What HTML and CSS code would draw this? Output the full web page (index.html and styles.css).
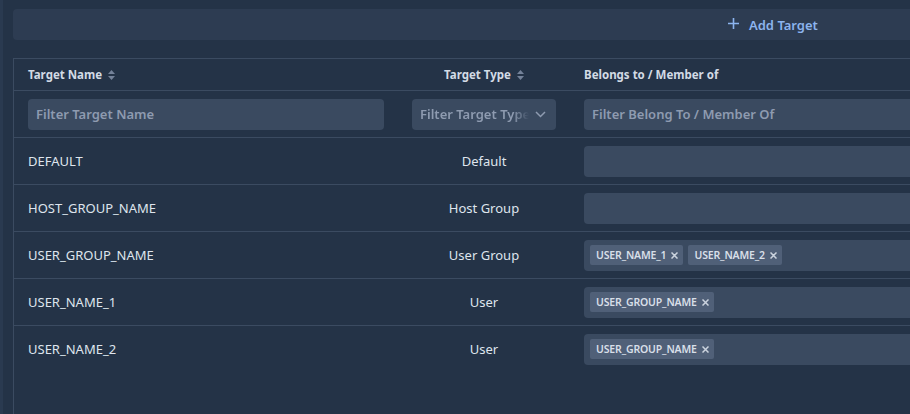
FILE: index.html
```html
<!DOCTYPE html>
<html>
<head>
<meta charset="utf-8">
<link rel="stylesheet" href="styles.css">
</head>
<body>
<div class="page">
  <div class="toolbar">
    <button class="add-btn"><svg class="plus" width="11" height="11" viewBox="0 0 11 11"><path d="M5.5 0v11M0 5.5h11" stroke="#8cb4ee" stroke-width="1.6"/></svg><span>Add Target</span></button>
  </div>
  <div class="table">
    <div class="row head">
      <div class="cell c1"><span>Target Name</span><svg class="sort" width="7" height="10" viewBox="0 0 7 10"><path d="M3.5 0L7 4H0z M3.5 10L7 6H0z" fill="#748299"/></svg></div>
      <div class="cell c2 center"><span>Target Type</span><svg class="sort" width="7" height="10" viewBox="0 0 7 10"><path d="M3.5 0L7 4H0z M3.5 10L7 6H0z" fill="#748299"/></svg></div>
      <div class="cell c3"><span>Belongs to / Member of</span></div>
    </div>
    <div class="row filters">
      <div class="cell c1"><div class="input ph">Filter Target Name</div></div>
      <div class="cell c2"><div class="input select ph"><span class="seltext">Filter Target Type</span><svg width="11" height="7" viewBox="0 0 11 7"><path d="M1 1l4.5 4.5L10 1" fill="none" stroke="#8e9bb0" stroke-width="1.5"/></svg></div></div>
      <div class="cell c3"><div class="input ph">Filter Belong To / Member Of</div></div>
    </div>
    <div class="row">
      <div class="cell c1">DEFAULT</div>
      <div class="cell c2 center">Default</div>
      <div class="cell c3"><div class="input tags"></div></div>
    </div>
    <div class="row">
      <div class="cell c1">HOST_GROUP_NAME</div>
      <div class="cell c2 center">Host Group</div>
      <div class="cell c3"><div class="input tags"></div></div>
    </div>
    <div class="row">
      <div class="cell c1">USER_GROUP_NAME</div>
      <div class="cell c2 center">User Group</div>
      <div class="cell c3"><div class="input tags"><span class="chip">USER_NAME_1<svg width="7" height="7" viewBox="0 0 7 7"><path d="M0.5 0.5l6 6M6.5 0.5l-6 6" stroke="#cbd3de" stroke-width="1.5"/></svg></span><span class="chip">USER_NAME_2<svg width="7" height="7" viewBox="0 0 7 7"><path d="M0.5 0.5l6 6M6.5 0.5l-6 6" stroke="#cbd3de" stroke-width="1.5"/></svg></span></div></div>
    </div>
    <div class="row">
      <div class="cell c1">USER_NAME_1</div>
      <div class="cell c2 center">User</div>
      <div class="cell c3"><div class="input tags"><span class="chip">USER_GROUP_NAME<svg width="7" height="7" viewBox="0 0 7 7"><path d="M0.5 0.5l6 6M6.5 0.5l-6 6" stroke="#cbd3de" stroke-width="1.5"/></svg></span></div></div>
    </div>
    <div class="row last">
      <div class="cell c1">USER_NAME_2</div>
      <div class="cell c2 center">User</div>
      <div class="cell c3"><div class="input tags"><span class="chip">USER_GROUP_NAME<svg width="7" height="7" viewBox="0 0 7 7"><path d="M0.5 0.5l6 6M6.5 0.5l-6 6" stroke="#cbd3de" stroke-width="1.5"/></svg></span></div></div>
    </div>
  </div>
</div>
</body>
</html>
```
FILE: styles.css
```css
html, body {
  margin: 0;
  padding: 0;
  height: 100%;
  overflow: hidden;
  background: #243347;
}
body {
  font-family: "Noto Sans", "Open Sans", sans-serif;
  color: #dfe5ed;
  font-size: 13px;
  border-left: 3px solid #2a3a50;
  box-sizing: border-box;
}
.page {
  width: 100%;
  padding: 9px 0 0 10px;
  box-sizing: border-box;
  height: 100%;
  display: flex;
  flex-direction: column;
  overflow: hidden;
}
.toolbar {
  height: 31px;
  background: #2d3c52;
  border-radius: 4px 0 0 4px;
  display: flex;
  align-items: center;
  padding-left: 715px;
}
.add-btn {
  background: none;
  border: 0;
  padding: 0;
  color: #8cb4ee;
  font-family: inherit;
  font-size: 13px;
  font-weight: 600;
  display: flex;
  align-items: center;
  gap: 10px;
}
.plus {
  margin-top: -2px;
}
.table {
  margin-top: 18px;
  border-top: 1px solid #3b4b61;
  border-left: 1px solid #3b4b61;
  flex: 1;
}
.row {
  display: grid;
  grid-template-columns: 384px 172px 1fr;
  height: 46px;
  border-bottom: 1px solid #3b4b61;
  align-items: center;
}
.row.last { border-bottom: 0; }
.row.head {
  height: 31px;
  font-size: 11.5px;
  font-weight: 700;
  color: #d3dbe5;
}
.cell {
  padding: 0 14px;
  display: flex;
  align-items: center;
  gap: 6px;
  min-width: 0;
}
.c1 { padding-left: 14px; padding-right: 14px; }
.c3 { padding-right: 0; }
.center { justify-content: center; }
.sort { flex: none; }
.input {
  height: 31px;
  flex: 1;
  background: #3a4a60;
  border-radius: 4px;
  display: flex;
  align-items: center;
  padding: 0 8px;
  box-sizing: border-box;
  min-width: 0;
}
.c3 .input { border-radius: 4px 0 0 4px; }
.ph {
  color: #8e9bb0;
  font-weight: 600;
  font-size: 13px;
}
.select {
  gap: 6px;
  padding-right: 10px;
}
.seltext {
  flex: 1;
  white-space: nowrap;
  overflow: hidden;
  min-width: 0;
  -webkit-mask-image: linear-gradient(to right, #000 85%, transparent);
}
.tags {
  padding: 0 6px;
  gap: 5px;
}
.chip {
  height: 20px;
  background: #506078;
  border-radius: 2px;
  color: #d8dfe8;
  font-size: 10.5px;
  font-weight: 600;
  letter-spacing: -0.15px;
  display: flex;
  align-items: center;
  padding: 0 5px 0 6px;
  gap: 5px;
  white-space: nowrap;
}
```
